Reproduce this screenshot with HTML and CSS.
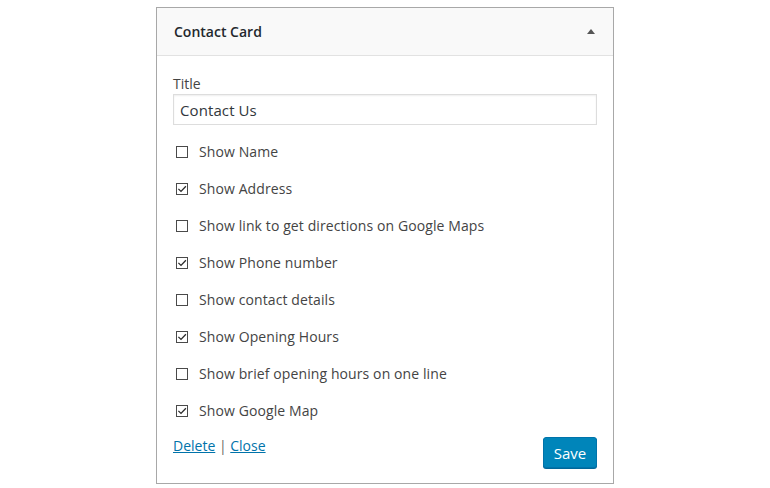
FILE: index.html
```html
<!DOCTYPE html>
<html>
<head>
<meta charset="utf-8">
<link rel="stylesheet" href="styles.css">
</head>
<body>
<div class="widget">
  <div class="widget-top">
    <span class="widget-title">Contact Card</span>
    <span class="toggle-arrow"></span>
  </div>
  <div class="widget-inside">
    <label class="field-label">Title</label>
    <div class="text-input">Contact Us</div>
    <ul class="options">
      <li class="option"><span class="cb"></span><span class="opt-text">Show Name</span></li>
      <li class="option"><span class="cb"><svg viewBox="0 0 10 10" class="tick"><path d="M1.4 4.9 L4 7.4 L8.9 2.2" /></svg></span><span class="opt-text">Show Address</span></li>
      <li class="option"><span class="cb"></span><span class="opt-text">Show link to get directions on Google Maps</span></li>
      <li class="option"><span class="cb"><svg viewBox="0 0 10 10" class="tick"><path d="M1.4 4.9 L4 7.4 L8.9 2.2" /></svg></span><span class="opt-text">Show Phone number</span></li>
      <li class="option"><span class="cb"></span><span class="opt-text">Show contact details</span></li>
      <li class="option"><span class="cb"><svg viewBox="0 0 10 10" class="tick"><path d="M1.4 4.9 L4 7.4 L8.9 2.2" /></svg></span><span class="opt-text">Show Opening Hours</span></li>
      <li class="option"><span class="cb"></span><span class="opt-text">Show brief opening hours on one line</span></li>
      <li class="option"><span class="cb"><svg viewBox="0 0 10 10" class="tick"><path d="M1.4 4.9 L4 7.4 L8.9 2.2" /></svg></span><span class="opt-text">Show Google Map</span></li>
    </ul>
    <div class="widget-footer">
      <div class="links"><a href="#">Delete</a> <span class="sep">|</span> <a href="#">Close</a></div>
      <button class="save-btn">Save</button>
    </div>
  </div>
</div>
</body>
</html>
```
FILE: styles.css
```css
html, body {
  margin: 0;
  padding: 0;
  background: #ffffff;
}
body {
  font-family: "Open Sans", "Liberation Sans", sans-serif;
  color: #444444;
}
.widget {
  box-sizing: border-box;
  width: 458px;
  height: 477px;
  margin: 7px 0 0 156px;
  border: 1px solid #a8a8a8;
  background: #ffffff;
}
.widget-top {
  height: 47px;
  background: #f9f9f9;
  border-bottom: 1px solid #e2e2e2;
  display: flex;
  align-items: center;
  justify-content: space-between;
  padding: 0 18px 0 17px;
}
.widget-title {
  font-size: 14px;
  font-weight: 600;
  color: #23282d;
}
.toggle-arrow {
  width: 0;
  height: 0;
  border-left: 4px solid transparent;
  border-right: 4px solid transparent;
  border-bottom: 5px solid #555555;
  margin-top: -1px;
}
.widget-inside {
  padding: 18px 16px 0 16px;
}
.field-label {
  display: block;
  font-size: 14px;
  line-height: 20px;
  color: #444444;
}
.text-input {
  box-sizing: border-box;
  height: 31px;
  margin-top: 0;
  border: 1px solid #dddddd;
  box-shadow: inset 0 1px 2px rgba(0,0,0,0.07);
  padding: 0 6px;
  font-size: 15px;
  line-height: 30px;
  color: #32373c;
  letter-spacing: 0.1px;
}
.options {
  list-style: none;
  margin: 8px 0 0 0;
  padding: 0;
}
.option {
  height: 37px;
  display: flex;
  align-items: center;
}
.cb {
  box-sizing: border-box;
  width: 12px;
  height: 12px;
  margin-left: 3px;
  margin-right: 11px;
  border: 1px solid #4a4a4a;
  display: flex;
  flex: none;
}
.tick {
  width: 10px;
  height: 10px;
  fill: none;
  stroke: #2a2a2a;
  stroke-width: 1.3;
}
.opt-text {
  font-size: 14px;
  color: #444444;
  letter-spacing: 0.1px;
}
.widget-footer {
  display: flex;
  justify-content: space-between;
  align-items: flex-start;
  padding-top: 8px;
}
.links {
  font-size: 14px;
  line-height: 18px;
  margin-top: 0;
  color: #666666;
}
.links a {
  color: #0073aa;
  text-decoration: underline;
}
.sep {
  color: #666666;
}
.save-btn {
  box-sizing: border-box;
  width: 54px;
  height: 31px;
  background: #0085ba;
  border: 1px solid #0073aa;
  border-radius: 3px;
  box-shadow: 0 1px 0 #006799;
  color: #ffffff;
  font-family: "Open Sans", "Liberation Sans", sans-serif;
  font-size: 15px;
  padding: 0;
  cursor: pointer;
}
```
